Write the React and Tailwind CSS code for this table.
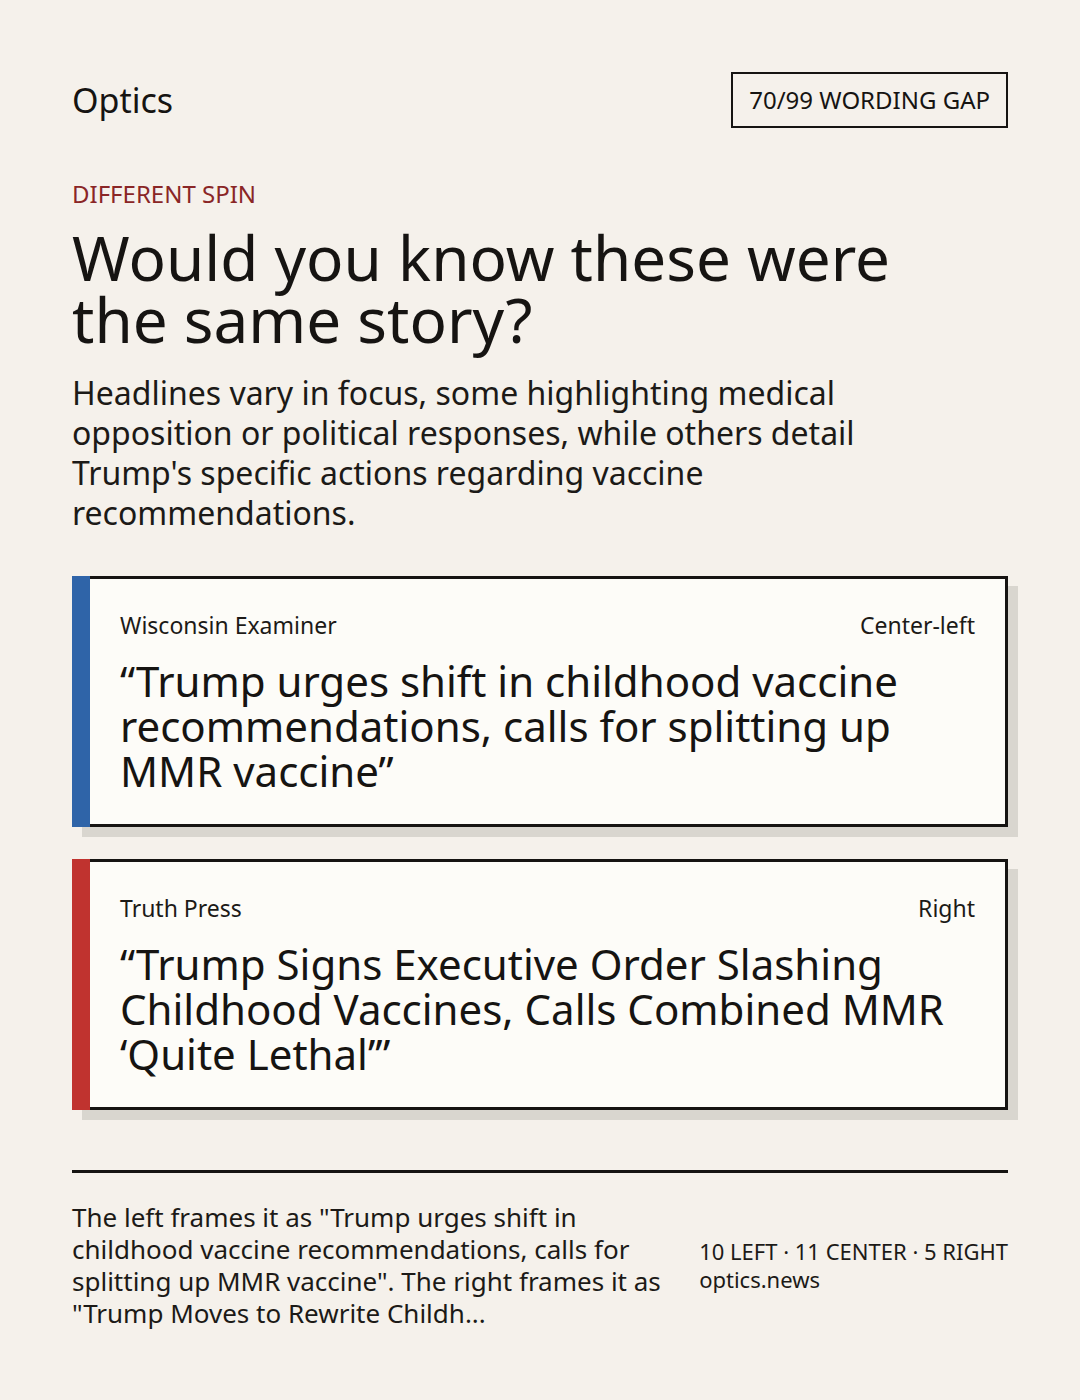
import React from "react";

const cards = [
  {
    source: "Wisconsin Examiner",
    lean: "Center-left",
    bar: "bg-[#2f64a8]",
    quote: "“Trump urges shift in childhood vaccine recommendations, calls for splitting up MMR vaccine”",
  },
  {
    source: "Truth Press",
    lean: "Right",
    bar: "bg-[#c0332f]",
    quote: "“Trump Signs Executive Order Slashing Childhood Vaccines, Calls Combined MMR ‘Quite Lethal’”",
  },
];

const HeadlineCard = ({ source, lean, bar, quote }) => (
  <div className="flex shadow-[10px_10px_0_#d9d6cf]">
    <div className={`w-[18px] shrink-0 ${bar}`} />
    <div className="flex-1 bg-[#fdfcf8] border-[3px] border-l-0 border-[#161412] pt-[30px] pb-[31px] pl-[30px] pr-[30px]">
      <div className="flex justify-between text-[23px] leading-[32px] text-[#1c1a17]">
        <span>{source}</span>
        <span>{lean}</span>
      </div>
      <p className="mt-[17px] text-[42px] leading-[45px] text-[#161412]">{quote}</p>
    </div>
  </div>
);

export default function App() {
  return (
    <div
      className="min-h-[1400px] bg-[#f5f1eb] px-[72px] pt-[72px] text-[#161412]"
      style={{ fontFamily: '"Noto Sans", "Open Sans", sans-serif' }}
    >
      <header className="flex items-center justify-between">
        <div className="text-[34px] leading-[40px]">Optics</div>
        <div className="border-2 border-[#161412] h-[56px] px-[16px] flex items-center text-[24px]">
          70/99 WORDING GAP
        </div>
      </header>

      <div className="mt-[50px] text-[24px] leading-[32px] text-[#8a2626]">DIFFERENT SPIN</div>
      <h1 className="mt-[16px] max-w-[880px] text-[62px] leading-[62px] font-normal">
        Would you know these were the same story?
      </h1>
      <p className="mt-[23px] max-w-[800px] text-[32px] leading-[40px] text-[#1c1a17]">
        Headlines vary in focus, some highlighting medical opposition or political responses, while others detail Trump's specific actions regarding vaccine recommendations.
      </p>

      <div className="mt-[43px] flex flex-col gap-[32px]">
        {cards.map((c) => (
          <HeadlineCard key={c.source} {...c} />
        ))}
      </div>

      <div className="mt-[60px] h-[3px] bg-[#161412]" />

      <footer className="mt-[28px] flex items-center justify-between gap-[30px]">
        <p className="flex-1 text-[26px] leading-[32px] text-[#1c1a17]">
          The left frames it as "Trump urges shift in childhood vaccine recommendations, calls for splitting up MMR vaccine". The right frames it as "Trump Moves to Rewrite Childh...
        </p>
        <div className="text-[22px] leading-[28px] text-[#1c1a17] whitespace-nowrap">
          <div>10 LEFT · 11 CENTER · 5 RIGHT</div>
          <div>optics.news</div>
        </div>
      </footer>
    </div>
  );
}
